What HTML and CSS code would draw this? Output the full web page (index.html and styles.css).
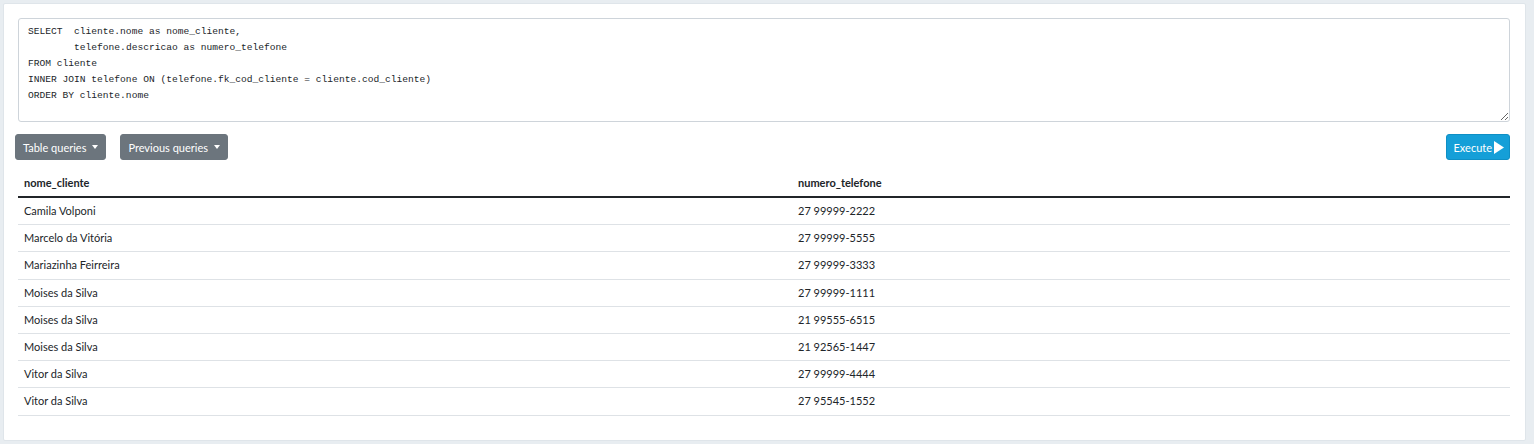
FILE: index.html
```html
<!DOCTYPE html>
<html lang="pt">
<head>
<meta charset="utf-8">
<link rel="stylesheet" href="styles.css">
</head>
<body>
<div class="card">
<textarea class="sql" spellcheck="false">SELECT  cliente.nome as nome_cliente,
        telefone.descricao as numero_telefone
FROM cliente
INNER JOIN telefone ON (telefone.fk_cod_cliente = cliente.cod_cliente)
ORDER BY cliente.nome</textarea>
<div class="toolbar">
  <button class="btn btn-gray">Table queries <span class="caret"></span></button>
  <button class="btn btn-gray">Previous queries <span class="caret"></span></button>
  <span class="spacer"></span>
  <button class="btn btn-blue">Execute <svg class="play" width="10" height="13" viewBox="0 0 10 13"><path d="M0 0 L10 6.5 L0 13 Z" fill="#fff"/></svg></button>
</div>
<table class="result">
  <thead>
    <tr><th class="c1">nome_cliente</th><th>numero_telefone</th></tr>
  </thead>
  <tbody>
    <tr><td>Camila Volponi</td><td>27 99999-2222</td></tr>
    <tr><td>Marcelo da Vitória</td><td>27 99999-5555</td></tr>
    <tr><td>Mariazinha Feirreira</td><td>27 99999-3333</td></tr>
    <tr><td>Moises da Silva</td><td>27 99999-1111</td></tr>
    <tr><td>Moises da Silva</td><td>21 99555-6515</td></tr>
    <tr><td>Moises da Silva</td><td>21 92565-1447</td></tr>
    <tr><td>Vitor da Silva</td><td>27 99999-4444</td></tr>
    <tr><td>Vitor da Silva</td><td>27 95545-1552</td></tr>
  </tbody>
</table>
</div>
</body>
</html>
```
FILE: styles.css
```css
html, body {
  margin: 0;
  padding: 0;
  background: #e8edf1;
}
body {
  padding: 3px 8px 3px 3px;
  font-family: Lato, "Noto Sans", sans-serif;
  font-size: 11px;
  color: #212529;
}
.card {
  background: #fff;
  border: 1px solid #dfe5ea;
  border-radius: 2px;
  padding: 14px 15px 25px 11px;
  height: 438px;
  box-sizing: border-box;
  display: flex;
  flex-direction: column;
}
.sql {
  margin: 0 0 0 3px;
  height: 104px;
  flex: none;
  box-sizing: border-box;
  border: 1px solid #ced4da;
  border-radius: 3px;
  padding: 5px 9px;
  font-family: "Liberation Mono", "DejaVu Sans Mono", monospace;
  font-size: 9.6px;
  line-height: 16px;
  color: #212529;
  resize: vertical;
  outline: none;
}
.toolbar {
  display: flex;
  align-items: center;
  gap: 14px;
  margin-top: 12px;
}
.spacer { flex: 1; }
.btn {
  height: 26px;
  border-radius: 3px;
  font-family: inherit;
  font-size: 11px;
  color: #fff;
  padding: 0 7px;
  display: flex;
  align-items: center;
  gap: 4px;
  cursor: pointer;
}
.btn-gray {
  background: #6c757d;
  border: 1px solid #6c757d;
}
.btn-blue {
  background: #159fd8;
  border: 1px solid #0f8fc5;
  gap: 2px;
  padding: 0 5px 0 6px;
}
.caret {
  width: 0;
  height: 0;
  border-left: 3.5px solid transparent;
  border-right: 3.5px solid transparent;
  border-top: 4px solid #fff;
  margin-left: 2px;
}
.play { display: block; }
.result {
  margin: 10px 0 0 3px;
  border-collapse: collapse;
  width: calc(100% - 3px);
}
.result th {
  text-align: left;
  font-weight: 700;
  padding: 4px 6px;
  line-height: 18px;
  border-bottom: 2px solid #212529;
}
.result th.c1 { width: 762px; }
.result td {
  padding: 4px 6px;
  line-height: 18.2px;
  border-bottom: 1px solid #dee2e6;
}
```
